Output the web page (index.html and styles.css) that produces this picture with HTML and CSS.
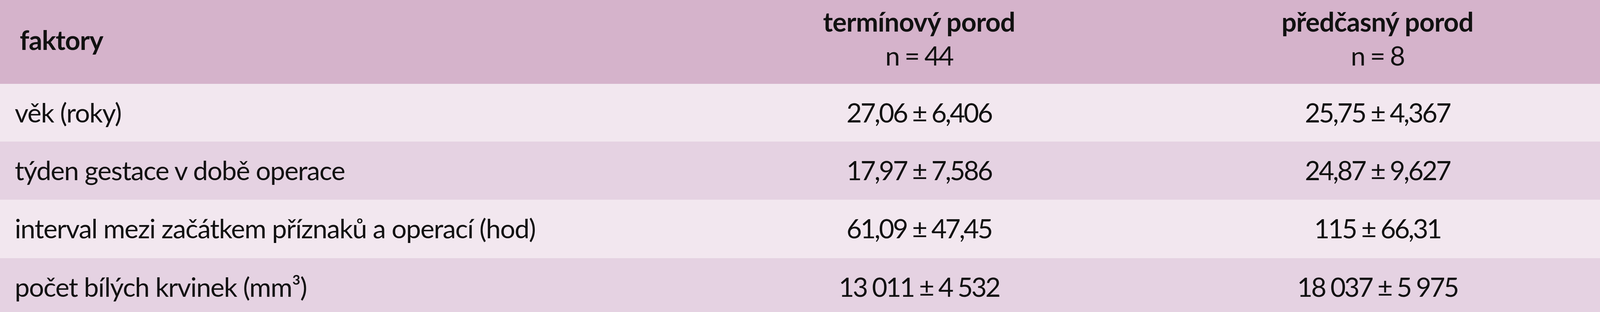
FILE: index.html
```html
<!DOCTYPE html>
<html lang="cs">
<head>
<meta charset="utf-8">
<title>faktory</title>
<link rel="stylesheet" href="styles.css">
</head>
<body>
<table class="data">
  <colgroup>
    <col class="c-label">
    <col class="c-term">
    <col class="c-pre">
  </colgroup>
  <thead>
    <tr class="head">
      <th class="label">faktory</th>
      <th class="num"><span class="title">termínový porod</span><span class="count">n = 44</span></th>
      <th class="num"><span class="title">předčasný porod</span><span class="count">n = 8</span></th>
    </tr>
  </thead>
  <tbody>
    <tr class="odd r1">
      <td class="label">věk (roky)</td>
      <td class="num">27,06 ± 6,406</td>
      <td class="num">25,75 ± 4,367</td>
    </tr>
    <tr class="even r2">
      <td class="label">týden gestace v době operace</td>
      <td class="num">17,97 ± 7,586</td>
      <td class="num">24,87 ± 9,627</td>
    </tr>
    <tr class="odd r3">
      <td class="label">interval mezi začátkem příznaků a operací (hod)</td>
      <td class="num">61,09 ± 47,45</td>
      <td class="num">115 ± 66,31</td>
    </tr>
    <tr class="even r4">
      <td class="label">počet bílých krvinek (mm³)</td>
      <td class="num">13 011 ± 4 532</td>
      <td class="num">18 037 ± 5 975</td>
    </tr>
  </tbody>
</table>
</body>
</html>
```

FILE: styles.css
```css
html, body {
  margin: 0;
  padding: 0;
  background: #e5d2e2;
}

body {
  font-family: Lato, "Open Sans", "Noto Sans", sans-serif;
  color: #111;
  overflow: hidden;
}

.data {
  width: 100%;
  border-collapse: collapse;
  table-layout: fixed;
  font-size: 68px;
}

.c-label { width: 42.7%; }
.c-term { width: 29.48%; }
.c-pre { width: 27.82%; }

.data th,
.data td {
  padding: 0;
  vertical-align: top;
  font-weight: 400;
  line-height: 87px;
}

.head {
  background: #d5b3cb;
  height: 215px;
}

.head th {
  padding-top: 11px;
}

.head th.label {
  font-weight: 700;
  text-align: left;
  padding-top: 58px;
  padding-left: 1.23vw;
  letter-spacing: -1px;
}

.head .title {
  display: block;
  font-weight: 700;
  letter-spacing: -0.8px;
}

.head .count {
  display: block;
  letter-spacing: -3px;
}

.odd { background: #f2e7ef; }
.even { background: #e5d2e2; }

.r1 { height: 148px; }
.r2 { height: 149px; }
.r3 { height: 150px; }
.r4 { height: 150px; }

.data td {
  padding-top: 29px;
}

.data td.label {
  text-align: left;
  padding-left: 0.92vw;
  letter-spacing: -1.5px;
}

.data td.num {
  text-align: center;
  letter-spacing: -3.8px;
}

.num {
  text-align: center;
}
```
